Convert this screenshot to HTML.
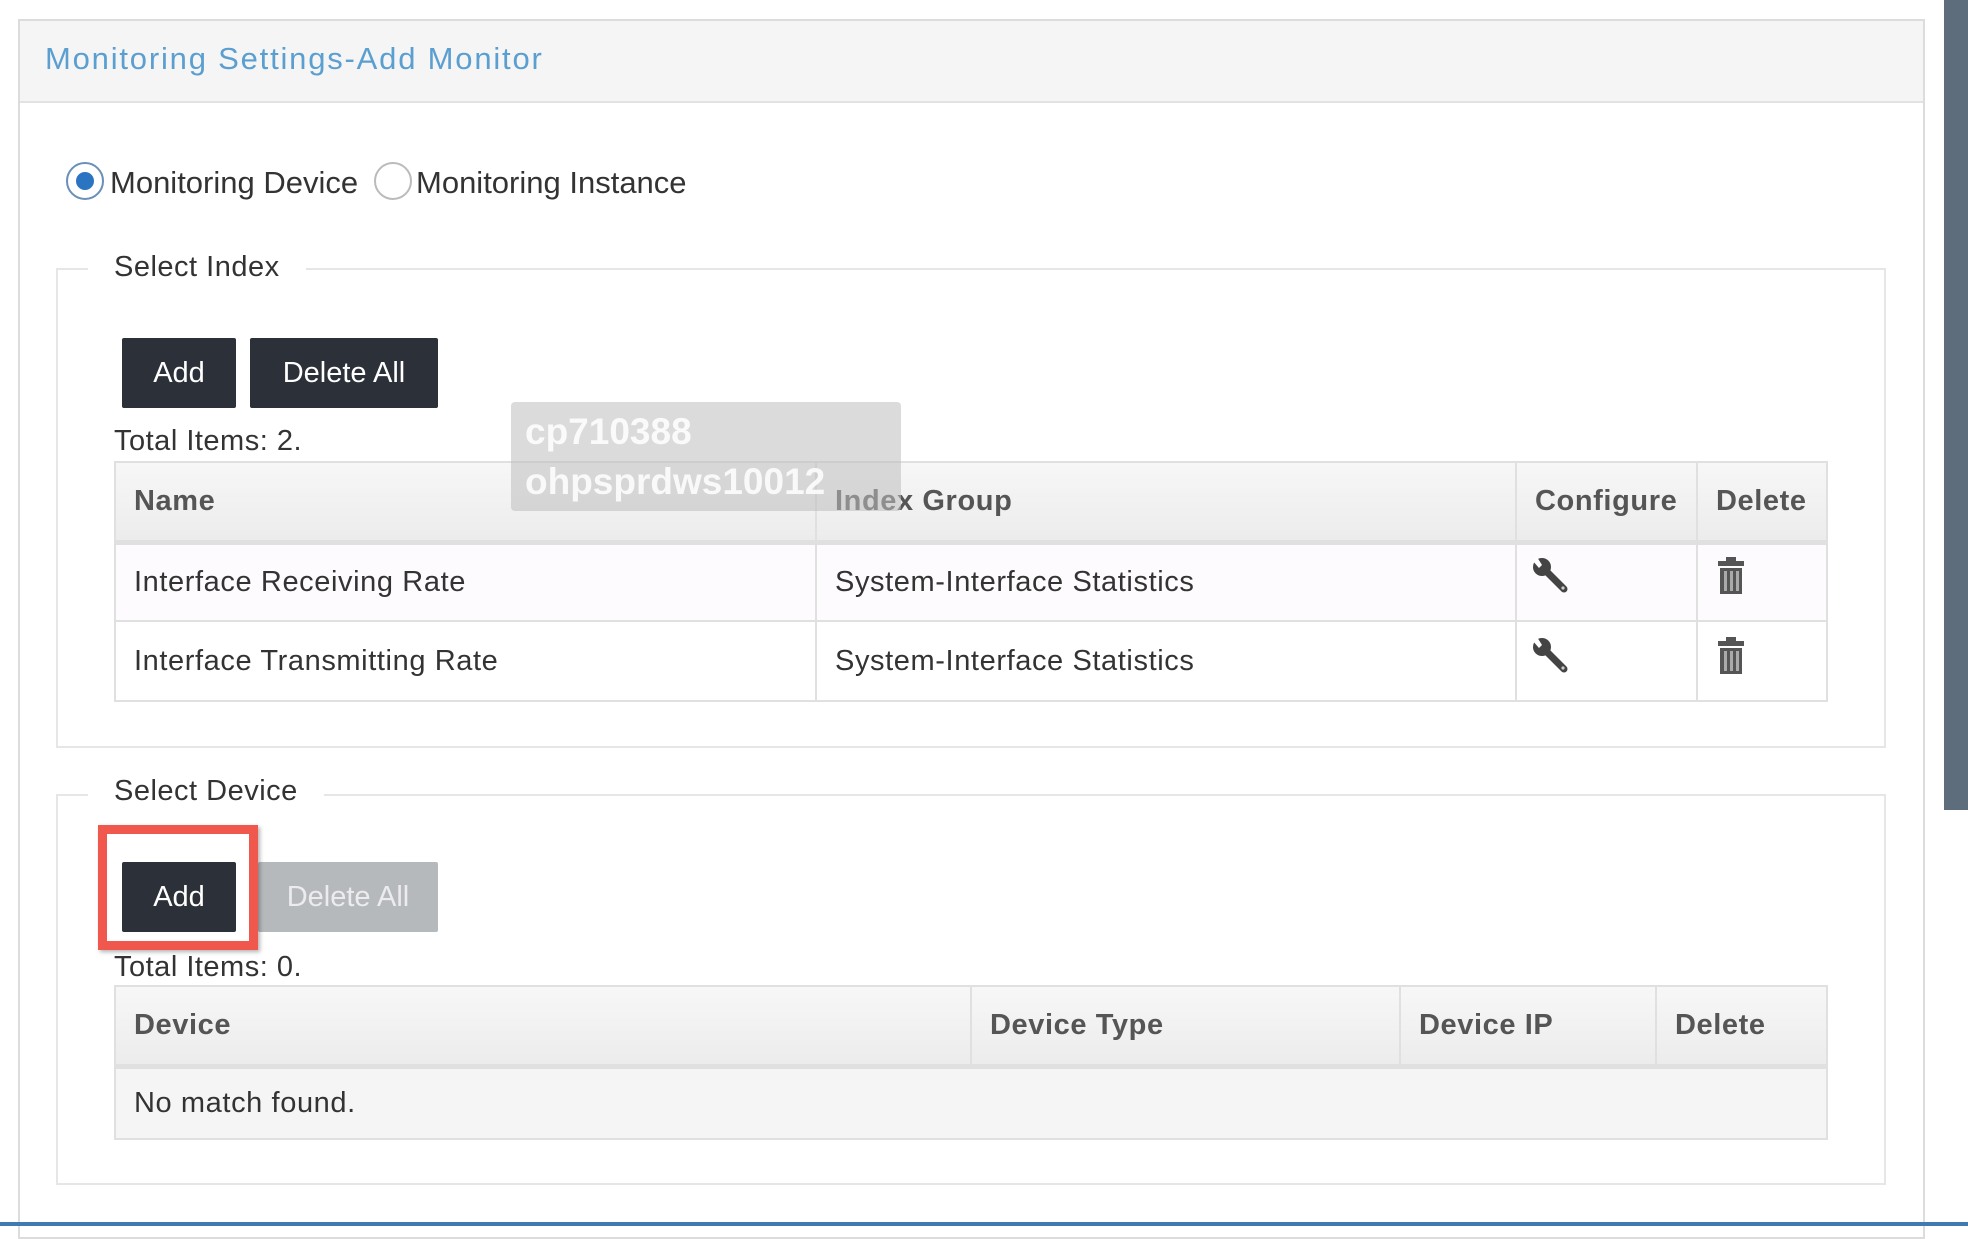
<!DOCTYPE html>
<html><head><meta charset="utf-8"><style>
*{box-sizing:border-box;margin:0;padding:0}
body{width:1968px;height:1226px;background:#fff;font-family:"Liberation Sans",sans-serif;position:relative;overflow:hidden;color:#333}
.abs{position:absolute}
.panel{left:18px;top:19px;width:1907px;height:1220px;border:2px solid #dcdcdc;background:#fff}
.hdr{left:20px;top:21px;width:1903px;height:82px;background:#f5f5f5;border-bottom:2px solid #e2e2e2}
.title{left:45px;top:41px;font-size:31px;letter-spacing:1.8px;color:#5b9fd1}
.radio{width:38px;height:38px;border-radius:50%;border:2px solid #999;background:#fff}
.txt{font-size:30px;color:#333;white-space:nowrap}
.fs{border:2px solid #e6e6e6}
.leg{background:#fff;padding:0 26px;font-size:29px;color:#333;letter-spacing:.5px}
.btn{background:#2b3039;color:#fff;font-size:29px;display:flex;align-items:center;justify-content:center;border-radius:2px}
table{border-collapse:collapse;position:absolute;font-size:29px;letter-spacing:.6px}
td,th{border:2px solid #e0e0e0;text-align:left;padding-left:18px;color:#333}
th{background:linear-gradient(#f7f7f7,#ececec);font-weight:bold;color:#555;border-bottom:5px solid #e0e0e0}
</style></head><body>
<div class="abs panel"></div>
<div class="abs hdr"></div>
<div class="abs title">Monitoring Settings-Add Monitor</div>
<div class="abs" style="left:1944px;top:0;width:24px;height:810px;background:#5d6d7b"></div>
<div class="abs" style="left:0;top:1222px;width:1968px;height:4px;background:#3f7ab0"></div>

<div class="abs radio" style="left:66px;top:162px;border-color:#6a8fb8"><div class="abs" style="left:8px;top:8px;width:18px;height:18px;border-radius:50%;background:#2b74c2"></div></div>
<div class="abs txt" style="left:110px;top:165px;font-size:31px">Monitoring Device</div>
<div class="abs radio" style="left:374px;top:162px;border-color:#bbb"></div>
<div class="abs txt" style="left:416px;top:165px;font-size:31px">Monitoring Instance</div>

<div class="abs fs" style="left:56px;top:268px;width:1830px;height:480px"></div>
<div class="abs leg" style="left:88px;top:251px">Select Index</div>
<div class="abs btn" style="left:122px;top:338px;width:114px;height:70px">Add</div>
<div class="abs btn" style="left:250px;top:338px;width:188px;height:70px">Delete All</div>
<div class="abs txt" style="left:114px;top:425px;font-size:29px;letter-spacing:.5px">Total Items: 2.</div>
<table style="left:114px;top:461px;width:1714px">
<tr style="height:80px"><th style="width:701px">Name</th><th style="width:700px">Index Group</th><th style="width:181px">Configure</th><th>Delete</th></tr>
<tr style="height:79px;background:#fdfbfd"><td>Interface Receiving Rate</td><td>System-Interface Statistics</td><td></td><td></td></tr>
<tr style="height:80px"><td>Interface Transmitting Rate</td><td>System-Interface Statistics</td><td></td><td></td></tr>
</table>
<svg class="abs" style="left:1531px;top:556px" width="42" height="120" viewBox="0 0 42 120">
<g id="w"><line x1="13" y1="13" x2="33" y2="33" stroke="#444" stroke-width="7" stroke-linecap="round"/>
<circle cx="11" cy="11" r="9" fill="#444"/><path d="M1 4 L6 1 L11 9 L8 12Z" fill="#fff"/><circle cx="32" cy="32" r="1.6" fill="#ccc"/></g>
<use href="#w" y="80"/></svg>
<svg class="abs" style="left:1716px;top:556px" width="32" height="120" viewBox="0 0 32 120">
<g fill="#555"><rect x="10" y="1" width="10" height="4"/><rect x="2" y="5" width="26" height="5"/><rect x="4" y="12" width="22" height="26"/>
<rect x="10" y="81" width="10" height="4"/><rect x="2" y="85" width="26" height="5"/><rect x="4" y="92" width="22" height="26"/></g>
<g fill="#aaa"><rect x="8" y="15" width="3" height="20"/><rect x="14" y="15" width="3" height="20"/><rect x="20" y="15" width="3" height="20"/>
<rect x="8" y="95" width="3" height="20"/><rect x="14" y="95" width="3" height="20"/><rect x="20" y="95" width="3" height="20"/></g></svg>

<div class="abs" style="left:511px;top:402px;width:390px;height:109px;background:rgba(190,190,190,.55);border-radius:4px;color:rgba(255,255,255,.85);font-weight:bold;font-size:37px;line-height:50px;padding:5px 14px;white-space:nowrap">cp710388<br>ohpsprdws10012</div>

<div class="abs fs" style="left:56px;top:794px;width:1830px;height:391px"></div>
<div class="abs leg" style="left:88px;top:775px">Select Device</div>
<div class="abs btn" style="left:258px;top:862px;width:180px;height:70px;background:#b6b9bc;color:#ecebee">Delete All</div>
<div class="abs" style="left:98px;top:825px;width:160px;height:125px;border:9px solid #f0584d;box-shadow:2px 2px 4px rgba(0,0,0,.3)"></div>
<div class="abs btn" style="left:122px;top:862px;width:114px;height:70px">Add</div>
<div class="abs txt" style="left:114px;top:951px;font-size:29px;letter-spacing:.5px">Total Items: 0.</div>
<table style="left:114px;top:985px;width:1714px">
<tr style="height:80px"><th style="width:856px">Device</th><th style="width:429px">Device Type</th><th style="width:256px">Device IP</th><th>Delete</th></tr>
<tr style="height:73px;background:#f5f5f5"><td colspan="4">No match found.</td></tr>
</table>
</body></html>
